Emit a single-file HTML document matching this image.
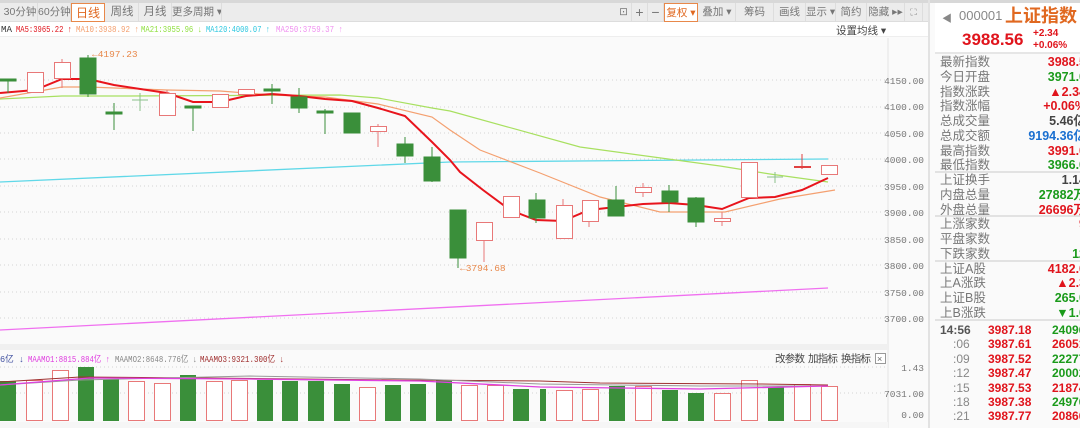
<!DOCTYPE html>
<html><head><meta charset="utf-8"><style>
*{margin:0;padding:0;box-sizing:border-box}
body{width:1080px;height:428px;overflow:hidden;background:#fafafa;font-family:"Liberation Sans","Noto Sans CJK SC",sans-serif;position:relative}
.abs{position:absolute}
.tab{position:absolute;top:3px;height:19px;font-size:10.5px;color:#777;text-align:center;line-height:19px;border-right:1px solid #ddd;white-space:nowrap;overflow:hidden}
.rp{position:absolute;left:935px;width:145px;font-size:12.5px}
.row{height:14.75px;line-height:14.75px;position:relative;white-space:nowrap}
.row .l{position:absolute;left:5px;color:#777}
.row .v{position:absolute;right:-6px;font-weight:bold;font-family:"Liberation Sans",sans-serif}
.r{color:#e0141c}.g{color:#1a9a1a}.b{color:#1a6fd0}.k{color:#444}
.t{height:14.4px;line-height:14.4px;position:relative;font-size:12px;font-weight:bold}
.t span{position:absolute}
</style></head><body>
<div class="abs" style="left:0;top:0;width:1080px;height:3px;background:#d8d8d8"></div>
<div class="abs" style="left:0;top:3px;width:928px;height:19px;background:#ececec;border-bottom:1px solid #ddd"></div>
<div class="tab" style="left:3px;width:35px">30分钟</div>
<div class="tab" style="left:38px;width:33px">60分钟</div>
<div class="tab" style="left:71px;width:34px;background:#fff;border:1px solid #e8884a;color:#e06820;font-size:12px">日线</div>
<div class="tab" style="left:106px;width:33px;font-size:11.5px">周线</div>
<div class="tab" style="left:139px;width:33px;font-size:11.5px">月线</div>
<div class="tab" style="left:172px;width:50px">更多周期 ▾</div>
<div class="tab" style="left:616px;width:16px">⊡</div>
<div class="tab" style="left:632px;width:16px;font-size:14px">+</div>
<div class="tab" style="left:648px;width:16px;font-size:14px">−</div>
<div class="tab" style="left:664px;width:34px;background:#fff;border:1px solid #e8884a;color:#e06820">复权 ▾</div>
<div class="tab" style="left:699px;width:37px">叠加 ▾</div>
<div class="tab" style="left:736px;width:38px">筹码</div>
<div class="tab" style="left:774px;width:32px">画线</div>
<div class="tab" style="left:806px;width:30px">显示 ▾</div>
<div class="tab" style="left:836px;width:31px">简约</div>
<div class="tab" style="left:867px;width:38px">隐藏 ▸▸</div>
<div class="tab" style="left:905px;width:18px;font-size:9px">⛶</div>
<div class="abs" style="left:0;top:22px;width:928px;height:15px;background:#fff;border-bottom:1px solid #eee">
<span style="position:absolute;left:836px;top:1px;color:#444;font-size:10.5px;white-space:nowrap">设置均线 ▾</span></div>

<svg class="abs" style="left:0;top:0" width="930" height="428">
<g font-family="Liberation Mono,monospace" font-size="9" lengthAdjust="spacingAndGlyphs">
<text x="1" y="32" fill="#333" textLength="11" lengthAdjust="spacingAndGlyphs">MA</text>
<text x="16" y="32" fill="#e0141c" textLength="56" lengthAdjust="spacingAndGlyphs">MA5:3965.22 ↑</text>
<text x="76" y="32" fill="#f4a070" textLength="63" lengthAdjust="spacingAndGlyphs">MA10:3938.92 ↑</text>
<text x="141" y="32" fill="#90e040" textLength="61" lengthAdjust="spacingAndGlyphs">MA21:3955.96 ↓</text>
<text x="206" y="32" fill="#30c8e0" textLength="64" lengthAdjust="spacingAndGlyphs">MA120:4000.07 ↑</text>
<text x="276" y="32" fill="#f090f0" textLength="67" lengthAdjust="spacingAndGlyphs">MA250:3759.37 ↑</text>
</g>
<g stroke="#d4d4d4" stroke-dasharray="1,3" stroke-width="1">
<line x1="0" y1="80" x2="888" y2="80"/><line x1="0" y1="107" x2="888" y2="107"/><line x1="0" y1="133" x2="888" y2="133"/><line x1="0" y1="159" x2="888" y2="159"/><line x1="0" y1="186" x2="888" y2="186"/><line x1="0" y1="212" x2="888" y2="212"/><line x1="0" y1="239" x2="888" y2="239"/><line x1="0" y1="265" x2="888" y2="265"/><line x1="0" y1="292" x2="888" y2="292"/><line x1="0" y1="318" x2="888" y2="318"/>
<line x1="0" y1="367" x2="888" y2="367"/><line x1="0" y1="393" x2="888" y2="393"/>
</g>
<line x1="888" y1="38" x2="888" y2="428" stroke="#e4e4e4"/>
<g font-family="Liberation Mono,monospace" font-size="9.5" fill="#777" text-anchor="end">
<text x="924" y="84">4150.00</text><text x="924" y="110">4100.00</text><text x="924" y="137">4050.00</text><text x="924" y="163">4000.00</text><text x="924" y="190">3950.00</text><text x="924" y="216">3900.00</text><text x="924" y="243">3850.00</text><text x="924" y="269">3800.00</text><text x="924" y="296">3750.00</text><text x="924" y="322">3700.00</text>
<text x="924" y="371">1.43</text><text x="924" y="397">7031.00</text><text x="924" y="418">0.00</text>
</g>
<polyline fill="none" stroke="#f070f0" stroke-width="1.3" points="0,330 828,288"/>
<polyline fill="none" stroke="#60d8e8" stroke-width="1.3" points="0,182 450,162 828,159"/>
<polyline fill="none" stroke="#a8e060" stroke-width="1.2" points="0,99 62,96 130,96 340,95 378,98 432,108 450,111 580,147 720,166 770,174 828,182"/>
<polyline fill="none" stroke="#f4a070" stroke-width="1.2" points="0,98 62,87 88,87 167,90 220,91 272,95 325,97 378,104 432,117 450,130 480,150 540,173 600,197 660,212 725,212 780,199 835,190"/>
<polyline fill="none" stroke="#e8141c" stroke-width="2" points="0,93 35,90 62,79 88,79 114,85 167,93 193,102 220,102 246,96 272,94 299,96 325,99 352,101 378,108 405,116 432,142 450,160 460,172 483,190 510,210 536,220 563,221 589,210 616,207 643,204 669,203 696,205 722,209 749,198 775,197 802,190 828,178"/>
<g stroke="#3a8f3a" fill="#3a8f3a">
<line x1="8" y1="79" x2="8" y2="93"/><rect x="0" y="79" width="16" height="2"/>
<line x1="88" y1="55" x2="88" y2="97"/><rect x="80" y="58" width="16" height="36"/>
<line x1="114" y1="103" x2="114" y2="130"/><rect x="106" y="112" width="16" height="2"/>
<line x1="140" y1="93" x2="140" y2="111" stroke="#8ac08a"/><line x1="132" y1="100" x2="148" y2="100" stroke="#8ac08a"/>
<line x1="193" y1="107" x2="193" y2="131"/><rect x="185" y="106" width="16" height="2"/>
<line x1="272" y1="84" x2="272" y2="104"/><rect x="264" y="89" width="16" height="2"/>
<line x1="299" y1="88" x2="299" y2="113"/><rect x="291" y="97" width="16" height="11"/>
<line x1="325" y1="109" x2="325" y2="134"/><rect x="317" y="111" width="16" height="2"/>
<rect x="344" y="113" width="16" height="20"/>
<line x1="405" y1="137" x2="405" y2="163"/><rect x="397" y="144" width="16" height="12"/>
<line x1="432" y1="147" x2="432" y2="182"/><rect x="424" y="157" width="16" height="24"/>
<line x1="458" y1="258" x2="458" y2="268"/><rect x="450" y="210" width="16" height="48"/>
<line x1="536" y1="193" x2="536" y2="223"/><rect x="529" y="200" width="16" height="18"/>
<line x1="616" y1="186" x2="616" y2="216"/><rect x="608" y="200" width="16" height="16"/>
<line x1="669" y1="185" x2="669" y2="212"/><rect x="662" y="191" width="16" height="11"/>
<line x1="696" y1="197" x2="696" y2="227"/><rect x="688" y="198" width="16" height="24"/>
<line x1="775" y1="172" x2="775" y2="183" stroke="#8ac08a"/><line x1="767" y1="177" x2="783" y2="177" stroke="#8ac08a"/>
</g>
<g stroke="#e87878" fill="#fff">
<rect x="27.5" y="72.5" width="16" height="20"/>
<line x1="62" y1="59" x2="62" y2="88"/><rect x="54.5" y="62.5" width="16" height="16"/>
<line x1="167" y1="90" x2="167" y2="93"/><rect x="159.5" y="93.5" width="16" height="22"/>
<rect x="212.5" y="94.5" width="16" height="13"/>
<rect x="238.5" y="89.5" width="16" height="5"/>
<line x1="378" y1="124" x2="378" y2="147"/><rect x="370.5" y="126.5" width="16" height="5"/>
<line x1="484" y1="240" x2="484" y2="262"/><rect x="476.5" y="222.5" width="16" height="18"/>
<rect x="503.5" y="196.5" width="16" height="21"/>
<line x1="563" y1="199" x2="563" y2="206"/><rect x="556.5" y="205.5" width="16" height="33"/>
<line x1="589" y1="221" x2="589" y2="227"/><rect x="582.5" y="200.5" width="16" height="21"/>
<line x1="643" y1="183" x2="643" y2="197"/><rect x="635.5" y="187.5" width="16" height="5"/>
<line x1="722" y1="212" x2="722" y2="226"/><rect x="714.5" y="218.5" width="16" height="3"/>
<rect x="741.5" y="162.5" width="16" height="35"/>
<line x1="802" y1="154" x2="802" y2="169" stroke="#e04040"/><line x1="794" y1="167" x2="811" y2="167" stroke="#e04040" stroke-width="2"/>
<rect x="821.5" y="165.5" width="16" height="9"/>
</g>
<text x="92" y="57" font-family="Liberation Mono,monospace" font-size="9.5" fill="#e8884a">←4197.23</text>
<text x="460" y="271" font-family="Liberation Mono,monospace" font-size="9.5" fill="#e8884a">←3794.68</text>
<rect x="0" y="344" width="888" height="6" fill="#f0f0f0"/>
<g fill="#3a8f3a">
<rect x="0" y="381" width="16" height="40"/><rect x="78" y="367" width="16" height="54"/><rect x="103" y="379" width="16" height="42"/><rect x="180" y="375" width="16" height="46"/><rect x="257" y="380" width="16" height="41"/><rect x="282" y="381" width="16" height="40"/><rect x="308" y="381" width="16" height="40"/><rect x="334" y="384" width="16" height="37"/><rect x="385" y="385" width="16" height="36"/><rect x="410" y="384" width="16" height="37"/><rect x="436" y="380" width="16" height="41"/><rect x="513" y="389" width="16" height="32"/><rect x="540" y="389" width="6" height="32"/><rect x="609" y="386" width="16" height="35"/><rect x="662" y="390" width="16" height="31"/><rect x="688" y="393" width="16" height="28"/><rect x="768" y="387" width="16" height="34"/>
</g>
<g fill="#fff" stroke="#e87878">
<rect x="26.5" y="380.5" width="16" height="40"/><rect x="52.5" y="370.5" width="16" height="50"/><rect x="128.5" y="381.5" width="16" height="39"/><rect x="154.5" y="383.5" width="16" height="37"/><rect x="206.5" y="381.5" width="16" height="39"/><rect x="231.5" y="380.5" width="16" height="40"/><rect x="359.5" y="387.5" width="16" height="33"/><rect x="461.5" y="385.5" width="16" height="35"/><rect x="487.5" y="385.5" width="16" height="35"/><rect x="556.5" y="390.5" width="16" height="30"/><rect x="582.5" y="389.5" width="16" height="31"/><rect x="635.5" y="386.5" width="16" height="34"/><rect x="714.5" y="393.5" width="16" height="27"/><rect x="741.5" y="380.5" width="16" height="40"/><rect x="794.5" y="384.5" width="16" height="36"/><rect x="821.5" y="386.5" width="16" height="34"/>
</g>
<polyline fill="none" stroke="#a03030" points="0,382 80,377 200,378 400,380 540,381 600,383 760,384 828,385"/>
<polyline fill="none" stroke="#999" points="0,385 80,380 250,376 420,379 540,384 700,386 828,386"/>
<polyline fill="none" stroke="#e040e0" stroke-width="1.3" points="0,385 90,378 250,379 420,381 540,387 620,388 700,389 828,386"/>
<g font-family="Liberation Mono,Noto Sans CJK SC,monospace" font-size="9">
<text x="0" y="362" fill="#4050a0" textLength="24" lengthAdjust="spacingAndGlyphs">6亿 ↓</text>
<text x="28" y="362" fill="#e040e0" textLength="82" lengthAdjust="spacingAndGlyphs">MAAMO1:8815.884亿 ↑</text>
<text x="115" y="362" fill="#888" textLength="82" lengthAdjust="spacingAndGlyphs">MAAMO2:8648.776亿 ↓</text>
<text x="200" y="362" fill="#a03030" textLength="84" lengthAdjust="spacingAndGlyphs">MAAMO3:9321.300亿 ↓</text>
</g>
<g font-family="Liberation Sans,Noto Sans CJK SC,sans-serif" font-size="10.5" fill="#444">
<text x="775" y="362" textLength="30">改参数</text><text x="808" y="362" textLength="30">加指标</text><text x="841" y="362" textLength="30">换指标</text>
</g>
<rect x="875.5" y="353.5" width="10" height="10" fill="#fff" stroke="#999"/><text x="877" y="362" font-size="9" fill="#666">×</text>
<rect x="0" y="422" width="888" height="6" fill="#f6f6f6"/>
<rect x="928" y="0" width="7" height="428" fill="#e2e2e2"/>
<path d="M930,343 L933,350 L930,357 Z" fill="#333"/>
</svg>

<div class="rp" style="top:3px;height:51px;background:#fff;border-bottom:2px solid #e6e6e6">
<div class="abs" style="left:7px;top:7px;font-size:10px;color:#888">◀</div>
<div class="abs" style="left:24px;top:5px;font-size:13px;color:#888;white-space:nowrap;line-height:16px">000001</div>
<div class="abs" style="left:70px;top:2px;font-size:18px;color:#e06820;font-weight:bold;white-space:nowrap;line-height:22px">上证指数</div>
<div class="abs r" style="left:27px;top:27px;font-size:17px;font-weight:bold;white-space:nowrap">3988.56</div>
<div class="abs r" style="left:98px;top:25px;font-size:10px;font-weight:bold;line-height:12px;white-space:nowrap">+2.34<br>+0.06%</div>
</div>
<div class="rp" style="top:55px;background:#fafafa">
<div class="row"><span class="l">最新指数</span><span class="v r">3988.5</span></div>
<div class="row"><span class="l">今日开盘</span><span class="v g">3971.0</span></div>
<div class="row"><span class="l">指数涨跌</span><span class="v r">▲2.34</span></div>
<div class="row"><span class="l">指数涨幅</span><span class="v r">+0.06%</span></div>
<div class="row"><span class="l">总成交量</span><span class="v k">5.46亿</span></div>
<div class="row"><span class="l">总成交额</span><span class="v b">9194.36亿</span></div>
<div class="row"><span class="l">最高指数</span><span class="v r">3991.0</span></div>
<div class="row" style="border-bottom:2px solid #e2e2e2"><span class="l">最低指数</span><span class="v g">3966.0</span></div>
<div class="row"><span class="l">上证换手</span><span class="v k">1.14</span></div>
<div class="row"><span class="l">内盘总量</span><span class="v g">27882万</span></div>
<div class="row" style="border-bottom:2px solid #e2e2e2"><span class="l">外盘总量</span><span class="v r">26696万</span></div>
<div class="row"><span class="l">上涨家数</span><span class="v r">9</span></div>
<div class="row"><span class="l">平盘家数</span><span class="v k"></span></div>
<div class="row" style="border-bottom:2px solid #e2e2e2"><span class="l">下跌家数</span><span class="v g">12</span></div>
<div class="row"><span class="l">上证A股</span><span class="v r">4182.0</span></div>
<div class="row"><span class="l">上A涨跌</span><span class="v r">▲2.3</span></div>
<div class="row"><span class="l">上证B股</span><span class="v g">265.0</span></div>
<div class="row" style="border-bottom:2px solid #e2e2e2"><span class="l">上B涨跌</span><span class="v g">▼1.0</span></div>
</div>
<div class="rp" style="top:322px;padding-top:1px;background:#fafafa">
<div class="t"><span style="left:5px;color:#555">14:56</span><span class="r" style="left:53px">3987.18</span><span class="g" style="left:117px">24096</span></div>
<div class="t"><span style="left:18px;color:#888;font-weight:normal">:06</span><span class="r" style="left:53px">3987.61</span><span class="r" style="left:117px">26051</span></div>
<div class="t"><span style="left:18px;color:#888;font-weight:normal">:09</span><span class="r" style="left:53px">3987.52</span><span class="g" style="left:117px">22277</span></div>
<div class="t"><span style="left:18px;color:#888;font-weight:normal">:12</span><span class="r" style="left:53px">3987.47</span><span class="g" style="left:117px">20002</span></div>
<div class="t"><span style="left:18px;color:#888;font-weight:normal">:15</span><span class="r" style="left:53px">3987.53</span><span class="r" style="left:117px">21874</span></div>
<div class="t"><span style="left:18px;color:#888;font-weight:normal">:18</span><span class="r" style="left:53px">3987.38</span><span class="g" style="left:117px">24970</span></div>
<div class="t"><span style="left:18px;color:#888;font-weight:normal">:21</span><span class="r" style="left:53px">3987.77</span><span class="r" style="left:117px">20866</span></div>
</div>
</body></html>
